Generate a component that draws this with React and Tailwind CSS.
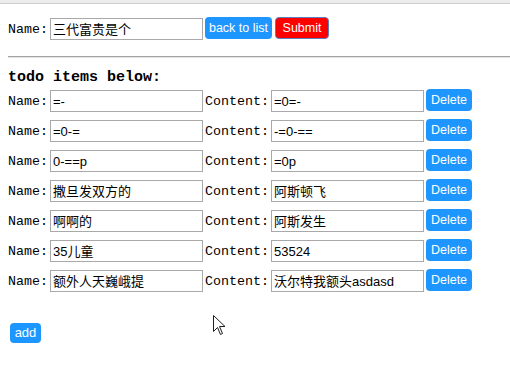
import React, { useState } from 'react';

const initialItems = [
  { name: '=-', content: '=0=-' },
  { name: '=0-=', content: '-=0-==' },
  { name: '0-==p', content: '=0p' },
  { name: '撒旦发双方的', content: '阿斯顿飞' },
  { name: '啊啊的', content: '阿斯发生' },
  { name: '35儿童', content: '53524' },
  { name: '额外人天巍峨提', content: '沃尔特我额头asdasd' },
];

const labelFont = { fontFamily: '"Liberation Mono", "Noto Sans CJK SC", monospace' };
const inputFont = { fontFamily: '"Liberation Sans", "Noto Sans CJK SC", sans-serif' };

function Field({ value, onChange }) {
  return (
    <input
      value={value}
      onChange={(e) => onChange(e.target.value)}
      style={inputFont}
      className="w-[153px] h-[22px] border border-[#a9a9a9] bg-white px-[2px] text-[13px] text-black outline-none"
    />
  );
}

function Label({ text, w }) {
  return (
    <span style={labelFont} className={`${w} pt-[4px] leading-[18px] text-[13.33px] text-black`}>
      {text}
    </span>
  );
}

function Cursor() {
  return (
    <svg
      className="absolute left-[213px] top-[315px]"
      width="13"
      height="21"
      viewBox="0 0 13 21"
    >
      <path
        d="M0.5 0.5 L0.5 16.5 L4.5 12.5 L7.5 19.5 L9.5 18.5 L6.5 11.5 L12 11.5 Z"
        fill="white"
        stroke="#1f1f1f"
        strokeWidth="1"
        strokeLinejoin="round"
      />
    </svg>
  );
}

export default function App() {
  const [name, setname] = useState('三代富贵是个');
  const [items, setitems] = useState(initialItems);

  const update = (i, key, val) => {
    setitems(items.map((it, idx) => (idx === i ? { ...it, [key]: val } : it)));
  };

  return (
    <div className="relative w-[510px] h-[374px] bg-white overflow-hidden">

      {/* top strip */}
      <div className="h-[3px] bg-[#ececec]" />
      <div className="h-px bg-[#cdcdcd]" />

      <div className="pl-2 pt-[13px]">

        {/* edit row */}
        <div className="flex items-center h-[22px]">
          <Label text="Name:" w="w-[40px]" />
          <div className="ml-[2px]">
            <Field value={name} onChange={setname} />
          </div>
          <button
            style={inputFont}
            className="ml-[2px] w-[67px] h-[22px] rounded-[4px] bg-[#1e96ff] text-white text-[12.5px]"
          >
            back to list
          </button>
          <button
            style={inputFont}
            className="ml-[3px] w-[54px] h-[22px] rounded-[4px] bg-[#ff0000] border border-[#5a7fc0] text-white text-[12.5px]"
          >
            Submit
          </button>
        </div>

        <div className="mt-[17px] border-t border-[#a3a3a3] border-b border-b-[#e2e2e2]" />

        <div
          style={labelFont}
          className="mt-[11px] h-[18px] leading-[18px] text-[15px] font-bold text-black"
        >
          todo items below:
        </div>

        {/* todo list */}
        <div className="mt-[2px] flex flex-col gap-[8px]">
          {items.map((it, i) => (
            <div key={i} className="flex items-center h-[22px]">
              <Label text="Name:" w="w-[40px]" />
              <div className="ml-[2px]">
                <Field value={it.name} onChange={(v) => update(i, 'name', v)} />
              </div>
              <span className="ml-[2px]" />
              <Label text="Content:" w="w-[64px]" />
              <div className="ml-[2px]">
                <Field value={it.content} onChange={(v) => update(i, 'content', v)} />
              </div>
              <button
                onClick={() => setitems(items.filter((_, idx) => idx !== i))}
                style={inputFont}
                className="ml-[2px] w-[46px] h-[22px] rounded-[4px] bg-[#1e96ff] text-white text-[12.5px]"
              >
                Delete
              </button>
            </div>
          ))}
        </div>

        <button
          onClick={() => setitems([...items, { name: '', content: '' }])}
          style={inputFont}
          className="mt-[32px] ml-[2px] w-[31px] h-[20px] rounded-[4px] bg-[#1e96ff] text-white text-[13px]"
        >
          add
        </button>

      </div>

      <Cursor />

    </div>
  );
}
